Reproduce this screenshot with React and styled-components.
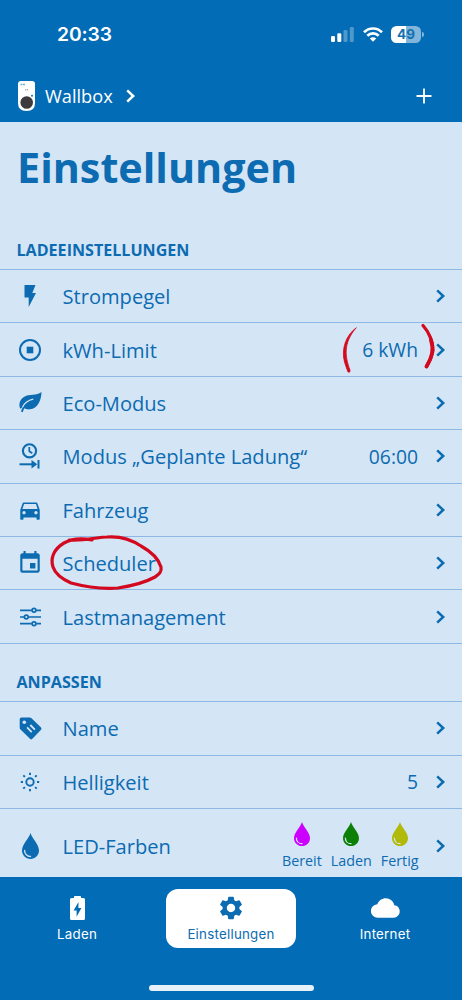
import React from 'react';
import styled, { createGlobalStyle } from 'styled-components';
import { MdDirectionsCar, MdEvent, MdSettings } from 'react-icons/md';

const BLUE = '#036cb6';
const INK = '#0c6bb1';
const PALE = '#d4e5f6';
const LINE = '#8db8e4';

const GlobalStyle = createGlobalStyle`
  * { box-sizing: border-box; }
  html, body { margin: 0; padding: 0; background: ${PALE}; }
  body { font-family: 'Open Sans', sans-serif; -webkit-font-smoothing: antialiased; }
`;

const Screen = styled.div`
  position: relative;
  width: 462px;
  height: 1000px;
  display: flex;
  flex-direction: column;
  overflow: hidden;
  background: ${PALE};
  color: ${INK};
`;

const Header = styled.header`
  height: 122px;
  flex: none;
  background: ${BLUE};
  color: #fff;
`;

const StatusBar = styled.div`
  height: 70px;
  padding: 0 38px 2px 57px;
  display: flex;
  align-items: center;
  justify-content: space-between;
`;

const Clock = styled.span`
  font: 600 19.3px/24px Inter, sans-serif;
  letter-spacing: -0.1px;
`;

const StatusIcons = styled.div`
  display: flex;
  align-items: center;
  gap: 8.500px;
`;

const BatteryWrap = styled.div`
  display: flex;
  align-items: center;
  gap: 1px;
  &::after {
    content: '';
    width: 2px;
    height: 5px;
    border-radius: 0 2px 2px 0;
    background: #81b5da;
  }
`;

const BatteryLevel = styled.div`
  width: 30px;
  height: 17px;
  border-radius: 5.500px;
  background: linear-gradient(90deg, #fff 50%, #81b5da 50%);
  color: #1670b2;
  font: 700 13.5px/17px Inter, sans-serif;
  text-align: center;
`;

const NavRow = styled.div`
  height: 52px;
  padding: 0 30px 0 18px;
  display: flex;
  align-items: center;
  justify-content: space-between;
`;

const Device = styled.div`
  display: flex;
  align-items: center;
  font-size: 18.2px;
  line-height: 26px;
  svg { display: block; }
`;

const DeviceName = styled.span`
  margin: 0 12.500px 0 9px;
`;

const Content = styled.main`
  height: 755px;
  flex: none;
  overflow: hidden;
`;

const Title = styled.h1`
  margin: 0;
  padding: 17px 17px 0;
  height: 110px;
  font-size: 41.3px;
  line-height: 57px;
  font-weight: 700;
`;

const SectionTitle = styled.h2`
  margin: 0;
  height: ${(p) => p.$height}px;
  padding: 0 16.500px ${(p) => p.$bottom}px;
  display: flex;
  align-items: flex-end;
  font-size: 16.1px;
  line-height: 20px;
  font-weight: 700;
`;

const Row = styled.div`
  height: ${(p) => p.$height || 53.4}px;
  border-top: 1px solid ${LINE};
  padding: 0 16px 0 17px;
  display: flex;
  align-items: center;
`;

const List = styled.div`
  border-bottom: ${(p) => (p.$closed ? `1px solid ${LINE}` : 'none')};
`;

const IconSlot = styled.div`
  width: 26px;
  height: 28px;
  flex: none;
  display: flex;
  align-items: center;
  justify-content: center;
  svg { display: block; }
`;

const Label = styled.span`
  flex: 1;
  margin-left: 19.5px;
  padding-top: 2px;
  font-size: 20.1px;
  line-height: 28px;
  white-space: nowrap;
`;

const Value = styled.span`
  margin-right: 17px;
  padding-top: 1px;
  font-size: 19.3px;
  line-height: 28px;
  white-space: nowrap;
`;

const ChevronBox = styled.svg`
  display: block;
  flex: none;
`;

const ColorGroup = styled.div`
  display: flex;
  gap: 9px;
  margin: 1px 16.500px 0 0;
`;

const ColorItem = styled.div`
  display: flex;
  flex-direction: column;
  align-items: center;
  gap: 5px;
  font-size: 14.3px;
  line-height: 20px;
  svg { display: block; }
`;

const TabBar = styled.nav`
  height: 123px;
  flex: none;
  background: ${BLUE};
  display: flex;
  flex-direction: column;
  align-items: center;
  justify-content: space-between;
  padding: 12px 12px 9px;
`;

const Tabs = styled.div`
  width: 100%;
  display: flex;
  justify-content: space-between;
`;

const Tab = styled.div`
  width: 130px;
  height: 59px;
  border-radius: 12px;
  display: flex;
  flex-direction: column;
  align-items: center;
  padding-top: 4.500px;
  background: ${(p) => (p.$active ? '#fff' : 'transparent')};
  color: ${(p) => (p.$active ? INK : '#fff')};
  font: 400 13.3px/18px Inter, sans-serif;
  letter-spacing: 0.25px;
`;

const TabIcon = styled.div`
  height: 28px;
  margin-bottom: 3px;
  display: flex;
  align-items: center;
  svg { display: block; }
`;

const HomeBar = styled.div`
  width: 165px;
  height: 6px;
  border-radius: 3px;
  background: #e6f1f9;
`;

const Annotations = styled.svg`
  position: absolute;
  left: 0;
  top: 0;
  pointer-events: none;
`;

const Chevron = ({ color = INK }) => (
  <ChevronBox width="11" height="14" viewBox="0 0 11 14">
    <path d="M2.200 1.300 8.200 7 2.200 12.700" fill="none" stroke={color} strokeWidth="2.5" />
  </ChevronBox>
);

const Signal = () => (
  <svg width="23" height="15" viewBox="0 0 23 15" fill="#fff">
    <rect x="0" y="9" width="4" height="6" rx="1.2" />
    <rect x="6.3" y="6.3" width="4" height="8.7" rx="1.2" />
    <rect x="12.5" y="3" width="4" height="12" rx="1.2" opacity=".3" />
    <rect x="18.8" y="0" width="4" height="15" rx="1.2" opacity=".3" />
  </svg>
);

const Wifi = () => (
  <svg width="20" height="15" viewBox="0 0 20 15" fill="none" stroke="#fff" strokeWidth="2.7">
    <path d="M1 5.3C6 .2 14 .2 19 5.3" />
    <path d="M4.3 8.7c3.2-3.2 8.2-3.2 11.4 0" />
    <path d="M10 14.7 6.8 11.5c1.8-1.7 4.6-1.7 6.4 0z" fill="#fff" stroke="none" />
  </svg>
);

const WallboxPhoto = () => (
  <svg width="18" height="30" viewBox="0 0 18 30">
    <path d="M3 0h11q3 0 3 3v19q0 8-8.500 8T0 22V3q0-3 3-3z" fill="#fff" />
    <circle cx="8.700" cy="21.500" r="6.300" fill="#3c3a3d" />
    <path d="M2.500 3.500h4.500" stroke="#61b6dc" strokeWidth="1.600" strokeDasharray="2 .5" />
    <path d="M7.200 8.800h3" stroke="#888" strokeWidth="1" strokeDasharray="1.200 .5" />
    <circle cx="14" cy="14.700" r="1" fill="#1670b2" />
  </svg>
);

const Flash = () => (
  <svg width="12" height="22" viewBox="0 0 12 22" fill={INK}>
    <path d="M.5 0h11L8.300 8H12L4.700 22v-9.500H.5z" />
  </svg>
);

const Limit = () => (
  <svg width="22" height="22" viewBox="0 0 22 22">
    <circle cx="11" cy="11" r="10" fill="none" stroke={INK} strokeWidth="2" />
    <path d="M7.700 7.700h6.600v6.600H7.700z" fill={INK} />
  </svg>
);

const Leaf = () => (
  <svg width="23" height="21" viewBox="0 0 23 21">
    <path d="M22.500 0C22.300 8.500 18.700 16.500 11 17.300 8.700 17.600 6.600 17.100 5.200 16.300L3.700 20.300 2 19.600C2.600 17.700 3.100 16.200 3.900 14.700 2.800 15.600 1.900 16.300 1.200 16.800-.8 11.800.9 7.300 5.300 4.700 10.300 1.800 17.500 3.800 22.500 0z" fill={INK} />
    <path d="M3.500 15.300C5.300 11.300 9.200 8.300 14.300 7.200" fill="none" stroke={PALE} strokeWidth="1.300" />
  </svg>
);

const Planned = () => (
  <svg width="22" height="26" viewBox="0 0 22 26" fill="none" stroke={INK}>
    <circle cx="10.500" cy="7.800" r="6.600" strokeWidth="2.100" />
    <path d="M10.300 4v4.200l3 2" strokeWidth="1.700" />
    <path d="M.5 21.300h13" strokeWidth="2" />
    <path d="M12.500 17v8.600l5.800-4.300z" fill={INK} stroke="none" />
    <path d="M19.500 17v8.600" strokeWidth="2" />
  </svg>
);

const Sliders = () => (
  <svg width="21" height="20" viewBox="0 0 21 20" fill="none" stroke={INK} strokeWidth="1.700">
    <path d="M0 3.300h11.700M16.300 3.300H21M0 10h4M8.500 10H21M0 16.700h11.700M16.300 16.700H21" />
    <circle cx="14" cy="3.300" r="1.900" />
    <circle cx="6.300" cy="10" r="1.900" />
    <circle cx="14" cy="16.700" r="1.900" />
  </svg>
);

const Tag = () => (
  <svg width="23" height="23" viewBox="0 0 23 23">
    <path d="M2.500.5h8.200q1 0 1.800.8l9.300 9q1.300 1.300 0 2.600l-8.400 8.900q-1.200 1.200-2.400 0L1.500 12.500Q.7 11.700.7 10.700V2.300Q.7.500 2.500.5z" fill={INK} />
    <circle cx="5.300" cy="5.200" r="1.800" fill={PALE} />
    <path d="m11.300 8 4.600 4.700M8.100 10.400l4.600 4.700" stroke={PALE} strokeWidth="1.800" />
  </svg>
);

const Sun = () => (
  <svg width="20" height="20" viewBox="0 0 20 20" fill="none" stroke={INK} strokeWidth="1.900">
    <circle cx="10" cy="10" r="3.700" />
    <path d="M10 .8v2.200M10 17v2.200M.8 10h2.200M17 10h2.200M3.300 3.300l1.600 1.600M15.100 15.100l1.600 1.600M3.300 16.700l1.600-1.600M15.100 4.900l1.600-1.600" />
  </svg>
);

const Drop = ({ color, width = 17, height = 24 }) => (
  <svg width={width} height={height} viewBox="0 0 17 25" preserveAspectRatio="none">
    <path d="M8.500 0C10.200 5.500 17 10.900 17 16.800 17 21.300 13.200 25 8.500 25S0 21.300 0 16.800C0 10.900 6.800 5.500 8.500 0z" fill={color} />
    <path d="M2.600 16.800c0 3.400 2.600 5.800 5.900 5.800" fill="none" stroke={PALE} strokeWidth="1.300" strokeLinecap="round" />
  </svg>
);

const Battery = () => (
  <svg width="15" height="24" viewBox="0 0 15 24">
    <path d="M1.500 2H4V.8Q4 0 4.800 0h5.400q.8 0 .8.800V2h2.500Q15 2 15 3.500v19q0 1.500-1.500 1.500h-12Q0 24 0 22.500v-19Q0 2 1.500 2z" fill="#fff" />
    <path d="M8.500 6 3.600 14.500h3v6.200l4.800-8.600h-3z" fill={BLUE} />
  </svg>
);

const Cloud = () => (
  <svg width="29" height="20" viewBox="0 0 29 20">
    <path d="M7 19.700A6.700 6.700 0 0 1 6.200 6.300C7.800 2.600 11 .3 14.700.3c4.400 0 7.900 3 8.600 7 3 .2 5.400 2.700 5.400 6.100a6.100 6.100 0 0 1-6.100 6.300z" fill="#fff" />
  </svg>
);

const chargingRows = [
  { label: 'Strompegel', icon: <Flash /> },
  { label: 'kWh-Limit', icon: <Limit />, value: '6 kWh' },
  { label: 'Eco-Modus', icon: <Leaf /> },
  { label: 'Modus „Geplante Ladung“', icon: <Planned />, value: '06:00' },
  { label: 'Fahrzeug', icon: <MdDirectionsCar size={26} /> },
  { label: 'Scheduler', icon: <MdEvent size={26} /> },
  { label: 'Lastmanagement', icon: <Sliders /> },
];

const customRows = [
  { label: 'Name', icon: <Tag /> },
  { label: 'Helligkeit', icon: <Sun />, value: '5' },
];

const ledColors = [
  { name: 'Bereit', color: '#cc00ff' },
  { name: 'Laden', color: '#0c8006' },
  { name: 'Fertig', color: '#b1b909' },
];

const SettingRow = ({ icon, label, value }) => (
  <Row>
    <IconSlot>{icon}</IconSlot>
    <Label>{label}</Label>
    {value && <Value>{value}</Value>}
    <Chevron />
  </Row>
);

export default function App() {
  return (
    <Screen>
      <GlobalStyle />
      <Header>
        <StatusBar>
          <Clock>20:33</Clock>
          <StatusIcons>
            <Signal />
            <Wifi />
            <BatteryWrap><BatteryLevel>49</BatteryLevel></BatteryWrap>
          </StatusIcons>
        </StatusBar>
        <NavRow>
          <Device>
            <WallboxPhoto />
            <DeviceName>Wallbox</DeviceName>
            <Chevron color="#fff" />
          </Device>
          <svg width="16" height="16" viewBox="0 0 16 16">
            <path d="M8 .5v15M.5 8h15" stroke="#fff" strokeWidth="1.800" />
          </svg>
        </NavRow>
      </Header>
      <Content>
        <Title>Einstellungen</Title>
        <SectionTitle $height={37} $bottom={9}>LADEEINSTELLUNGEN</SectionTitle>
        <List $closed>
          {chargingRows.map((row) => <SettingRow key={row.label} {...row} />)}
        </List>
        <SectionTitle $height={57.4} $bottom={9}>ANPASSEN</SectionTitle>
        <List>
          {customRows.map((row) => <SettingRow key={row.label} {...row} />)}
          <Row $height={76}>
            <IconSlot><Drop color={INK} height={26} /></IconSlot>
            <Label>LED-Farben</Label>
            <ColorGroup>
              {ledColors.map((led) => (
                <ColorItem key={led.name}>
                  <Drop color={led.color} width={16} height={24} />
                  <span>{led.name}</span>
                </ColorItem>
              ))}
            </ColorGroup>
            <Chevron />
          </Row>
        </List>
      </Content>
      <TabBar>
        <Tabs>
          <Tab>
            <TabIcon><Battery /></TabIcon>
            Laden
          </Tab>
          <Tab $active>
            <TabIcon><MdSettings size={28} /></TabIcon>
            Einstellungen
          </Tab>
          <Tab>
            <TabIcon><Cloud /></TabIcon>
            Internet
          </Tab>
        </Tabs>
        <HomeBar />
      </TabBar>
      <Annotations width="462" height="1000" viewBox="0 0 462 1000" fill="none" stroke="#d2091f" strokeLinecap="round" strokeLinejoin="round">
        <path d="M356 328C346 335 341 349 344.500 362Q346 367 348 372Q350.500 373 350 370C345 357 343 343 356 328z" fill="#d2091f" strokeWidth=".8" />
        <path d="M423 325.500C429 332 433 342 433 350C432 357 429 362 426.500 366.500" strokeWidth="3.300" />
        <path d="M431 340C434.500 350 432 358 426.500 366.500" strokeWidth="3.800" />
        <path d="M92 540C82 538 71 539 64 543C54 549 50 558 53 567C55 573 62 579 71 583C86 587 103 589 118 588C131 586 146 582 155 577C159 574 162 572 161 567C158 557 150 551 141 546C132 540 119 536 107 537C98 537 85 541 69 540" strokeWidth="3.200" />
      </Annotations>
    </Screen>
  );
}
